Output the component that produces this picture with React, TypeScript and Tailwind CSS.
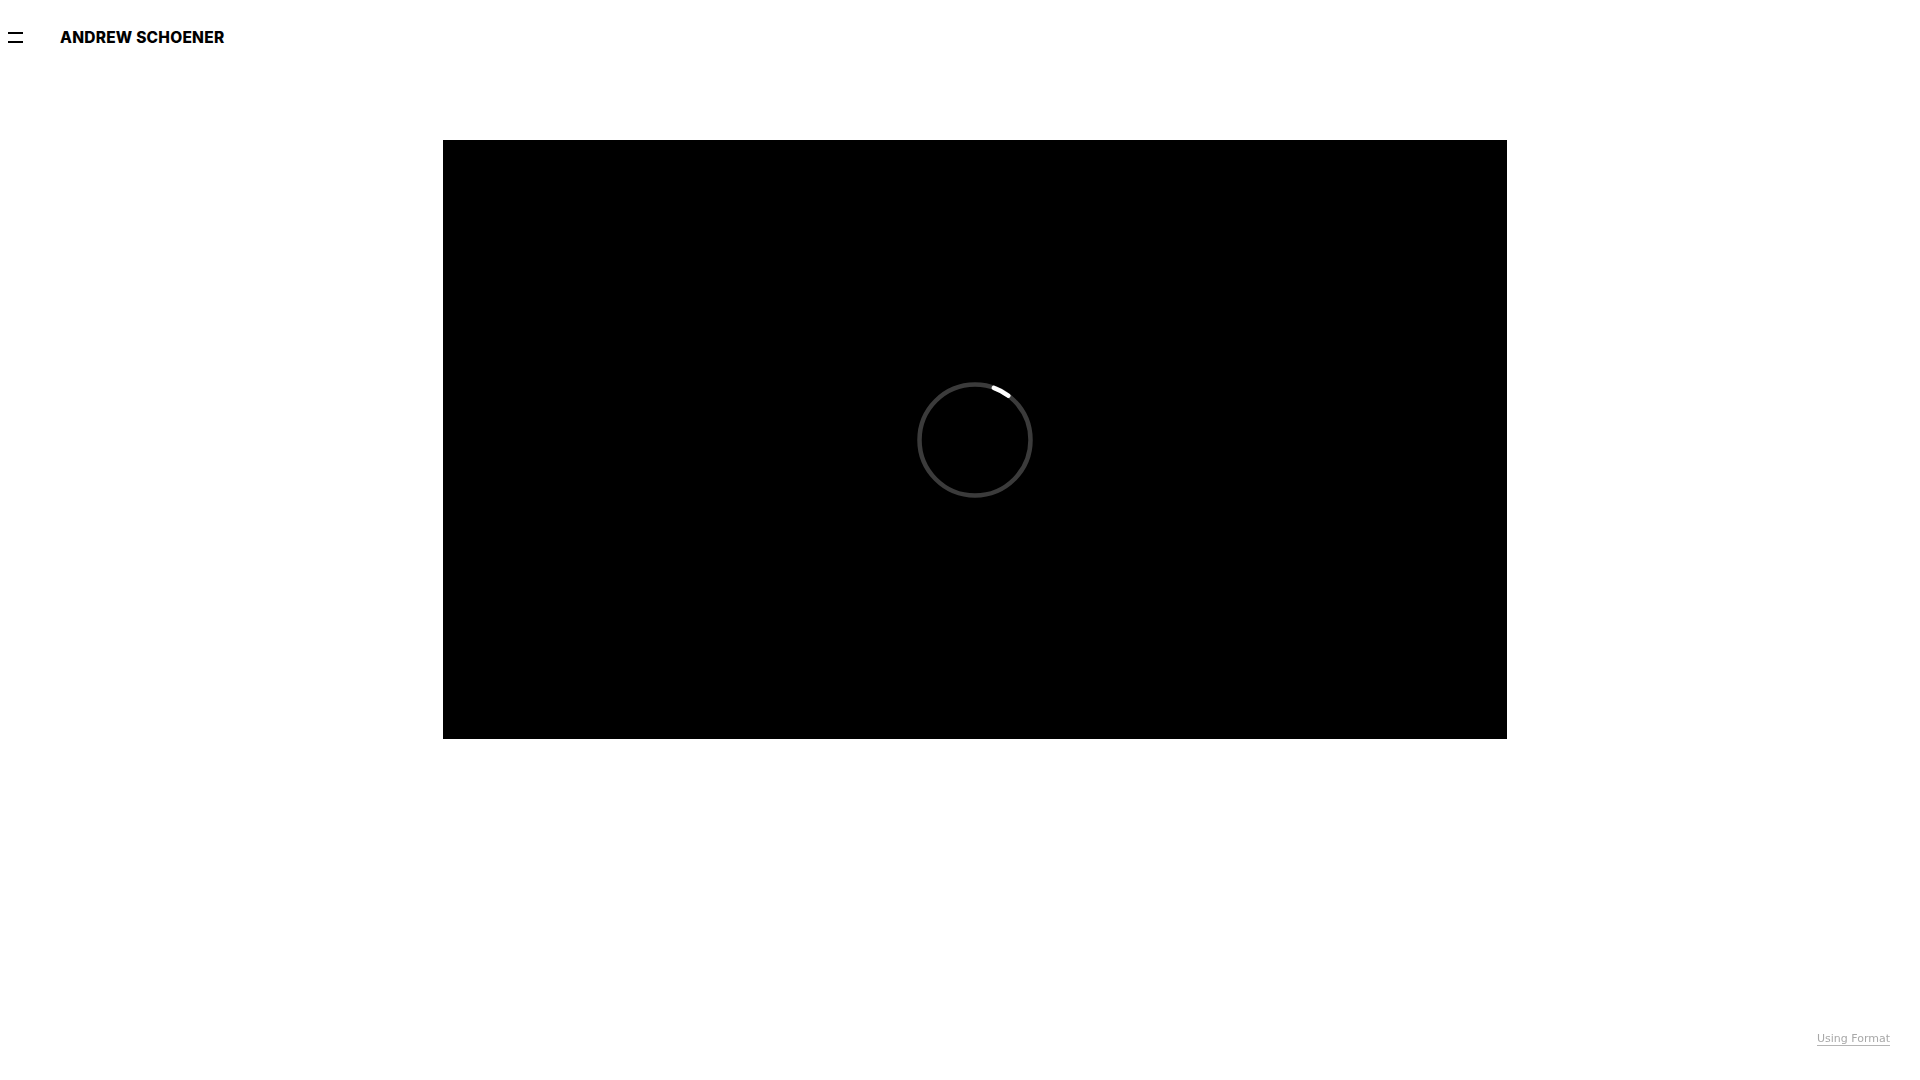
export default function App() {
  return (
    <div className="relative min-h-screen bg-white font-['Inter',sans-serif]">
      {/* Header */}
      <header className="flex h-[75px] items-center">
        <button className="ml-[8px] flex w-[15px] flex-col gap-[7px]">
          <span className="block h-[2px] w-full bg-black" />
          <span className="block h-[2px] w-full bg-black" />
        </button>
        <div className="ml-[37px] text-[15.5px] font-extrabold leading-none tracking-[0.015em] text-black">
          ANDREW SCHOENER
        </div>
      </header>

      {/* Video */}
      <main className="mt-[65px] flex justify-center pl-[30px]">
        <div className="flex h-[599px] w-[1064px] items-center justify-center bg-black">
          <svg width="116" height="116" viewBox="0 0 116 116">
            <circle cx="58" cy="58" r="55.5" fill="none" stroke="#3b3b3b" strokeWidth="4.5" />
            <path
              d="M76.8 5.8 A55.5 55.5 0 0 1 91.4 13.7"
              fill="none"
              stroke="#ffffff"
              strokeWidth="4.5"
              strokeLinecap="round"
            />
          </svg>
        </div>
      </main>

      {/* Badge */}
      <a className="fixed bottom-[34px] right-[30px] border-b border-[#b5b5b5] font-['DejaVu_Sans',sans-serif] text-[11px] leading-[13px] text-[#a8a8a8]">
        Using Format
      </a>
    </div>
  );
}
